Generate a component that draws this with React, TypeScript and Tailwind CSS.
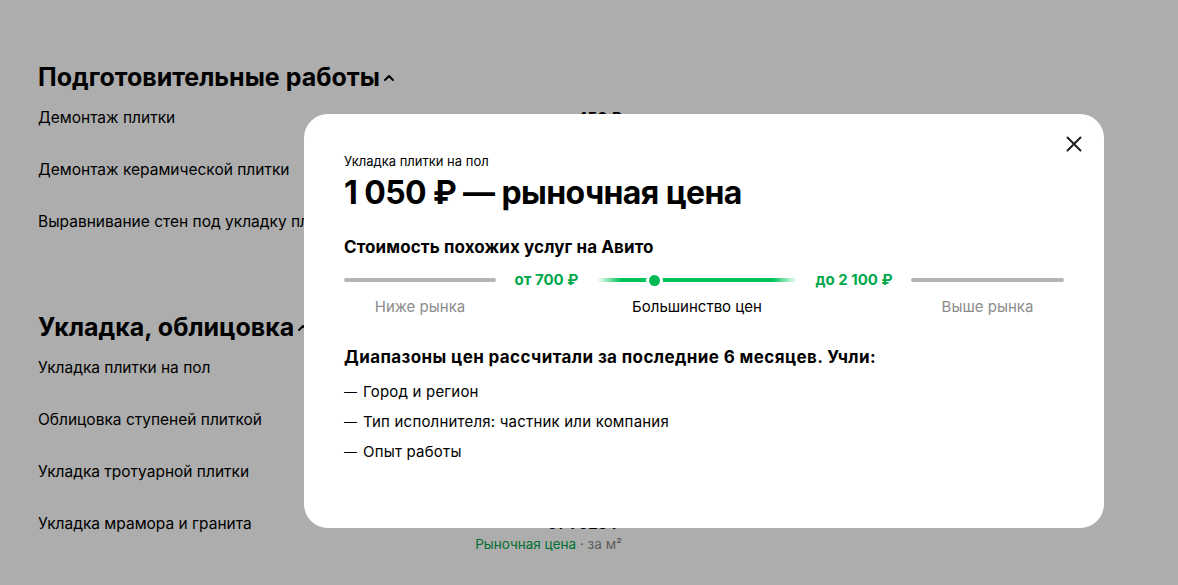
import { ChevronUp } from "lucide-react";

interface Service {
  name: string;
  price: string;
}

interface Section {
  title: string;
  items: Service[];
}

const sections: Section[] = [
  {
    title: "Подготовительные работы",
    items: [
      { name: "Демонтаж плитки", price: "от 450 ₽" },
      { name: "Демонтаж керамической плитки", price: "от 480 ₽" },
      { name: "Выравнивание стен под укладку плитки", price: "от 600 ₽" },
    ],
  },
  {
    title: "Укладка, облицовка",
    items: [
      { name: "Укладка плитки на пол", price: "от 1 050 ₽" },
      { name: "Облицовка ступеней плиткой", price: "от 1 400 ₽" },
      { name: "Укладка тротуарной плитки", price: "от 800 ₽" },
      { name: "Укладка мрамора и гранита", price: "от 1 025 ₽" },
    ],
  },
];

const factors = ["Город и регион", "Тип исполнителя: частник или компания", "Опыт работы"];

const font = "font-['Inter','Noto_Sans',sans-serif]";

const PriceModal = () => {
  return (
    <div className="fixed inset-0 bg-black/[0.32] flex items-start justify-start pt-[114px] pl-[304px]">
      <div className="relative w-[800px] h-[414px] bg-white rounded-[24px] px-10 pt-[38px]">
        <button className="absolute right-[14px] top-[14px] w-8 h-8 flex items-center justify-center text-[#1f1f1f]">
          <svg width="16" height="16" viewBox="0 0 16 16" fill="none">
            <path d="M1.5 1.5L14.5 14.5M14.5 1.5L1.5 14.5" stroke="currentColor" strokeWidth="2" strokeLinecap="round" />
          </svg>
        </button>
        <p className="text-[13px] leading-[18px] text-black">Укладка плитки на пол</p>
        <h2 className="text-[32px] leading-[40px] font-bold text-black mt-[3px] tracking-[-0.6px]">
          1 050 ₽ — рыночная цена
        </h2>
        <h3 className="text-[17px] leading-[22px] font-bold text-black mt-[23px] tracking-[0.1px]">
          Стоимость похожих услуг на Авито
        </h3>

        <div className="mt-[11px] flex items-start">
          <div className="w-[152px] flex flex-col items-center">
            <div className="h-[22px] w-full flex items-center">
              <div className="h-[4px] w-full rounded-full bg-[#b5b5b5]" />
            </div>
            <span className="mt-[6px] text-[15px] leading-[20px] text-[#8c8c8c]">Ниже рынка</span>
          </div>
          <div className="w-[101px] h-[22px] flex items-center justify-center text-[15px] font-bold text-[#00a84a]">
            от 700 ₽
          </div>
          <div className="w-[200px] flex flex-col items-center">
            <div className="h-[22px] w-full flex items-center relative">
              <div className="h-[4px] w-full rounded-full bg-[linear-gradient(90deg,rgba(2,209,92,0)_0%,#02c55a_12%,#02c55a_88%,rgba(2,209,92,0)_100%)]" />
              <div className="absolute left-[52px] top-[6px] w-[11px] h-[11px] rounded-full bg-[#02b957] ring-[3px] ring-white" />
            </div>
            <span className="mt-[6px] text-[15px] leading-[20px] text-black">Большинство цен</span>
          </div>
          <div className="w-[114px] h-[22px] flex items-center justify-center text-[15px] font-bold text-[#00a84a]">
            до 2 100 ₽
          </div>
          <div className="w-[153px] flex flex-col items-center">
            <div className="h-[22px] w-full flex items-center">
              <div className="h-[4px] w-full rounded-full bg-[#b5b5b5]" />
            </div>
            <span className="mt-[6px] text-[15px] leading-[20px] text-[#8c8c8c]">Выше рынка</span>
          </div>
        </div>

        <h3 className="text-[17px] leading-[22px] font-bold text-black mt-[29px] tracking-[0.4px]">
          Диапазоны цен рассчитали за последние 6 месяцев. Учли:
        </h3>
        <ul className="mt-[9px] flex flex-col text-[15px] leading-[30px] text-black tracking-[0.2px]">
          {factors.map((f) => (
            <li key={f} className="flex items-center gap-[7px]">
              <span className="text-[13px] leading-[30px] w-[12px] shrink-0">—</span>
              <span>{f}</span>
            </li>
          ))}
        </ul>
      </div>
    </div>
  );
};

export default function App() {
  return (
    <div className={`${font} min-h-[585px] bg-white text-black relative overflow-hidden`}>
      <div className="pl-[38px] pt-[62px] w-[622px]">
        {sections.map((section, i) => (
          <div key={section.title} className={i > 0 ? "mt-[60px]" : ""}>
            <h2 className="flex items-center text-[25px] leading-[30px] font-bold">
              {section.title}
              <ChevronUp size={16} strokeWidth={3} className="ml-[1px] mt-[2px]" />
            </h2>
            <div className="mt-[16px] flex flex-col gap-[12px]">
              {section.items.map((item) => (
                <div key={item.name} className="flex justify-between items-start">
                  <span className="text-[15.5px] leading-[20px]">{item.name}</span>
                  <div className="flex flex-col items-end">
                    <span className="text-[15px] leading-[20px] font-bold">{item.price}</span>
                    <span className="text-[13.5px] leading-[20px] text-[#8a8a8a]">
                      <span className="text-[#02a54a]">Рыночная цена</span> · за м²
                    </span>
                  </div>
                </div>
              ))}
            </div>
          </div>
        ))}
      </div>
      <PriceModal />
    </div>
  );
}
